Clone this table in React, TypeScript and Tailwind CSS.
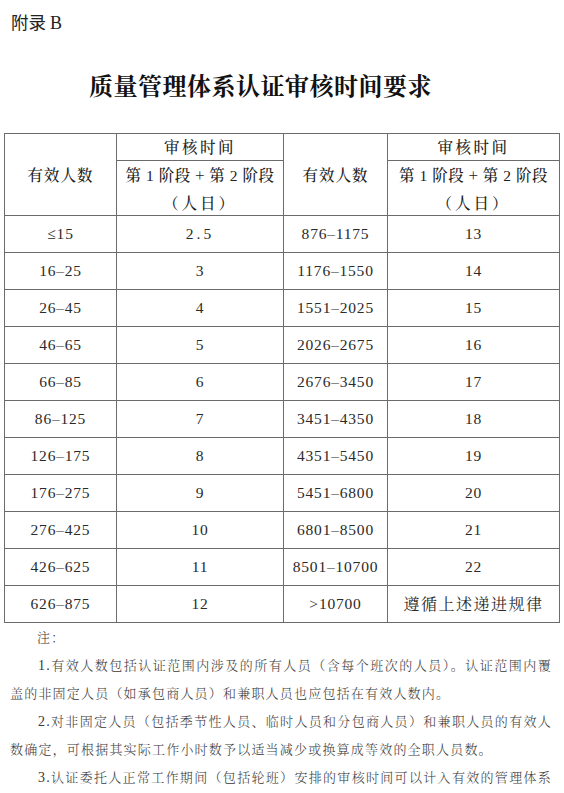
import React from "react";

const rows: [string, string, string, string][] = [
  ["≤15", "2.5", "876–1175", "13"],
  ["16–25", "3", "1176–1550", "14"],
  ["26–45", "4", "1551–2025", "15"],
  ["46–65", "5", "2026–2675", "16"],
  ["66–85", "6", "2676–3450", "17"],
  ["86–125", "7", "3451–4350", "18"],
  ["126–175", "8", "4351–5450", "19"],
  ["176–275", "9", "5451–6800", "20"],
  ["276–425", "10", "6801–8500", "21"],
  ["426–625", "11", "8501–10700", "22"],
  ["626–875", "12", ">10700", "遵循上述递进规律"],
];

const serifCJK = "font-['Noto_Serif_CJK_SC','Noto_Sans_CJK_SC',serif]";
const num = "font-['Liberation_Serif','Noto_Sans_CJK_SC',serif] text-[15.5px] tracking-[0.8px] text-[#2a2a2a]";
const cell = "border border-[#6b6b6b] text-center align-middle p-0";

export default function App() {
  return (
    <div className="w-[564px] h-[793px] bg-white overflow-hidden text-[#222]">
      <div className="pt-[12px] pl-[11px] text-[17.5px] leading-[20px] font-['Noto_Sans_CJK_SC',sans-serif] text-[#222]">
        附录 <span className="font-['Liberation_Serif',serif] text-[18px]">B</span>
      </div>
      <div className={`mt-[38px] ml-[89px] text-[24px] leading-[28px] font-bold tracking-[0.5px] text-[#111] ${serifCJK}`}>
        质量管理体系认证审核时间要求
      </div>
      <table className="mt-[34px] ml-[4px] w-[555px] border-collapse table-fixed">
        <colgroup>
          <col className="w-[112px]" />
          <col className="w-[167px]" />
          <col className="w-[104px]" />
          <col className="w-[172px]" />
        </colgroup>
        <thead>
          <tr className="h-[27px]">
            <th rowSpan={2} className={`${cell} font-medium text-[15.5px] tracking-[1px] text-[#222] ${serifCJK}`}>有效人数</th>
            <th className={`${cell} font-medium text-[15.5px] tracking-[2.5px] text-[#222] ${serifCJK}`}>审核时间</th>
            <th rowSpan={2} className={`${cell} font-medium text-[15.5px] tracking-[1px] text-[#222] ${serifCJK}`}>有效人数</th>
            <th className={`${cell} font-medium text-[15.5px] tracking-[2.5px] text-[#222] ${serifCJK}`}>审核时间</th>
          </tr>
          <tr className="h-[54px]">
            {[0, 1].map((i) => (
              <th key={i} className={`${cell} font-medium text-[15.5px] leading-[26px] text-[#222] ${serifCJK}`}>
                <div className="whitespace-nowrap tracking-[0.5px]">
                  第 <span className="font-['Liberation_Serif',serif]">1</span> 阶段 + 第 <span className="font-['Liberation_Serif',serif]">2</span> 阶段
                </div>
                <div className="tracking-[3px]">（人日）</div>
              </th>
            ))}
          </tr>
        </thead>
        <tbody>
          {rows.map((r, i) => (
            <tr key={i} className="h-[37px]">
              <td className={`${cell} ${num}`}>{r[0]}</td>
              <td className={`${cell} ${num}`}>{i === 0 ? <span className="tracking-[3px]">2.5</span> : r[1]}</td>
              <td className={`${cell} ${num}`}>{r[2]}</td>
              <td className={`${cell} ${i === 10 ? `text-[16px] tracking-[1.5px] text-[#2a2a2a] ${serifCJK}` : num}`}>{r[3]}</td>
            </tr>
          ))}
        </tbody>
      </table>
      <div className="mt-0 ml-[10px] w-[542px] text-[13px] leading-[27.5px] tracking-[1.2px] text-[#3a3a3a] font-['Noto_Serif_CJK_SC','Noto_Sans_CJK_SC',serif] font-light">
        <div className="pl-[27px]">注：</div>
        <div className="pl-[28px] text-justify [text-align-last:justify] whitespace-nowrap">
          <span className="font-['Liberation_Serif',serif] text-[14px]">1.</span>有效人数包括认证范围内涉及的所有人员（含每个班次的人员）。认证范围内覆
        </div>
        <div className="whitespace-nowrap">盖的非固定人员（如承包商人员）和兼职人员也应包括在有效人数内。</div>
        <div className="pl-[28px] text-justify [text-align-last:justify] whitespace-nowrap">
          <span className="font-['Liberation_Serif',serif] text-[14px]">2.</span>对非固定人员（包括季节性人员、临时人员和分包商人员）和兼职人员的有效人
        </div>
        <div className="whitespace-nowrap">数确定，可根据其实际工作小时数予以适当减少或换算成等效的全职人员数。</div>
        <div className="pl-[28px] text-justify [text-align-last:justify] whitespace-nowrap">
          <span className="font-['Liberation_Serif',serif] text-[14px]">3.</span>认证委托人正常工作期间（包括轮班）安排的审核时间可以计入有效的管理体系
        </div>
      </div>
    </div>
  );
}
